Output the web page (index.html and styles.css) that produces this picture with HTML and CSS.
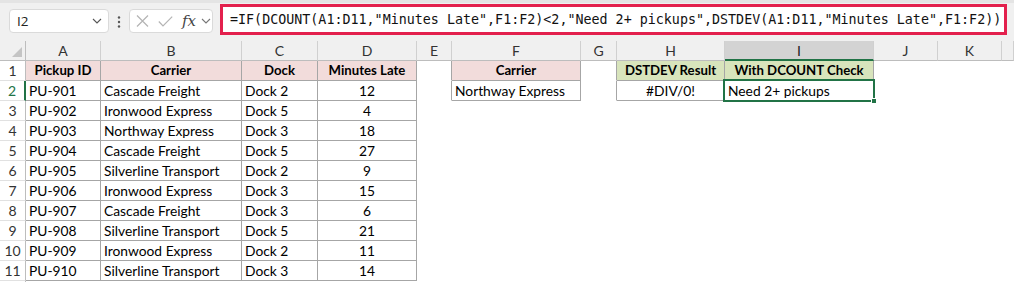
FILE: index.html
```html
<!DOCTYPE html>
<html>
<head>
<meta charset="utf-8">
<link rel="stylesheet" href="styles.css">
</head>
<body>
<div class="app">
  <div class="fbar">
    <div class="namebox">
      <span class="nb-text">I2</span>
      <svg class="chev" width="10" height="6" viewBox="0 0 10 6"><path d="M1 1 L5 5 L9 1" fill="none" stroke="#555" stroke-width="1.1"/></svg>
    </div>
    <svg class="dots" width="4" height="12" viewBox="0 0 4 12"><circle cx="2" cy="1.5" r="1.2" fill="#555"/><circle cx="2" cy="6" r="1.2" fill="#555"/><circle cx="2" cy="10.5" r="1.2" fill="#555"/></svg>
    <div class="fxbox">
      <svg class="ic-x" width="13" height="12" viewBox="0 0 13 12"><path d="M1 0.5 L12 11.5 M12 0.5 L1 11.5" stroke="#b4b4b4" stroke-width="1.2" fill="none"/></svg>
      <svg class="ic-ok" width="15" height="11" viewBox="0 0 15 11"><path d="M0.8 5.5 L5 10 L14.2 0.6" stroke="#b4b4b4" stroke-width="1.2" fill="none"/></svg>
      <span class="fx">fx</span>
      <svg class="chev2" width="10" height="6" viewBox="0 0 10 6"><path d="M1 1 L5 5 L9 1" fill="none" stroke="#777" stroke-width="1.1"/></svg>
    </div>
    <div class="formula">=IF(DCOUNT(A1:D11,"Minutes Late",F1:F2)&lt;2,"Need 2+ pickups",DSTDEV(A1:D11,"Minutes Late",F1:F2))</div>
  </div>
  <div class="sheet">
    <div class="ch corner"><svg width="10" height="10" viewBox="0 0 10 10"><path d="M10 0 L10 10 L0 10 Z" fill="#c4c4c4"/></svg></div>
    <div class="ch">A</div><div class="ch">B</div><div class="ch">C</div><div class="ch">D</div><div class="ch">E</div><div class="ch">F</div><div class="ch">G</div><div class="ch">H</div><div class="ch sel">I</div><div class="ch">J</div><div class="ch">K</div><div class="ch"></div>

    <div class="rh">1</div>
    <div class="c r b pk">Pickup ID</div><div class="c r b pk">Carrier</div><div class="c r b pk">Dock</div><div class="c r b pk">Minutes Late</div>
    <div class="c r"></div><div class="c r b pk">Carrier</div><div class="c r"></div>
    <div class="c r b gn">DSTDEV Result</div><div class="c r b gn">With DCOUNT Check</div><div class="c"></div><div class="c"></div><div class="c"></div>

    <div class="rh act">2</div>
    <div class="c r b">PU-901</div><div class="c r b">Cascade Freight</div><div class="c r b">Dock 2</div><div class="c r b n">12</div>
    <div class="c r"></div><div class="c r b">Northway Express</div><div class="c r"></div>
    <div class="c r b n">#DIV/0!</div><div class="c r b cur">Need 2+ pickups<span class="selbox"></span><span class="handle"></span></div><div class="c"></div><div class="c"></div><div class="c"></div>

    <div class="rh">3</div>
    <div class="c r b">PU-902</div><div class="c r b">Ironwood Express</div><div class="c r b">Dock 5</div><div class="c r b n">4</div>
    <div class="c"></div><div class="c"></div><div class="c"></div><div class="c"></div><div class="c"></div><div class="c"></div><div class="c"></div><div class="c"></div>

    <div class="rh">4</div>
    <div class="c r b">PU-903</div><div class="c r b">Northway Express</div><div class="c r b">Dock 3</div><div class="c r b n">18</div>
    <div class="c"></div><div class="c"></div><div class="c"></div><div class="c"></div><div class="c"></div><div class="c"></div><div class="c"></div><div class="c"></div>

    <div class="rh">5</div>
    <div class="c r b">PU-904</div><div class="c r b">Cascade Freight</div><div class="c r b">Dock 5</div><div class="c r b n">27</div>
    <div class="c"></div><div class="c"></div><div class="c"></div><div class="c"></div><div class="c"></div><div class="c"></div><div class="c"></div><div class="c"></div>

    <div class="rh">6</div>
    <div class="c r b">PU-905</div><div class="c r b">Silverline Transport</div><div class="c r b">Dock 2</div><div class="c r b n">9</div>
    <div class="c"></div><div class="c"></div><div class="c"></div><div class="c"></div><div class="c"></div><div class="c"></div><div class="c"></div><div class="c"></div>

    <div class="rh">7</div>
    <div class="c r b">PU-906</div><div class="c r b">Ironwood Express</div><div class="c r b">Dock 3</div><div class="c r b n">15</div>
    <div class="c"></div><div class="c"></div><div class="c"></div><div class="c"></div><div class="c"></div><div class="c"></div><div class="c"></div><div class="c"></div>

    <div class="rh">8</div>
    <div class="c r b">PU-907</div><div class="c r b">Cascade Freight</div><div class="c r b">Dock 3</div><div class="c r b n">6</div>
    <div class="c"></div><div class="c"></div><div class="c"></div><div class="c"></div><div class="c"></div><div class="c"></div><div class="c"></div><div class="c"></div>

    <div class="rh">9</div>
    <div class="c r b">PU-908</div><div class="c r b">Silverline Transport</div><div class="c r b">Dock 5</div><div class="c r b n">21</div>
    <div class="c"></div><div class="c"></div><div class="c"></div><div class="c"></div><div class="c"></div><div class="c"></div><div class="c"></div><div class="c"></div>

    <div class="rh">10</div>
    <div class="c r b">PU-909</div><div class="c r b">Ironwood Express</div><div class="c r b">Dock 2</div><div class="c r b n">11</div>
    <div class="c"></div><div class="c"></div><div class="c"></div><div class="c"></div><div class="c"></div><div class="c"></div><div class="c"></div><div class="c"></div>

    <div class="rh">11</div>
    <div class="c r b">PU-910</div><div class="c r b">Silverline Transport</div><div class="c r b">Dock 3</div><div class="c r b n">14</div>
    <div class="c"></div><div class="c"></div><div class="c"></div><div class="c"></div><div class="c"></div><div class="c"></div><div class="c"></div><div class="c"></div>

    <div class="rh"></div>
    <div class="c"></div><div class="c"></div><div class="c"></div><div class="c"></div><div class="c"></div><div class="c"></div><div class="c"></div><div class="c"></div><div class="c"></div><div class="c"></div><div class="c"></div><div class="c"></div>
  </div>
</div>
</body>
</html>
```

FILE: styles.css
```css
* { box-sizing: border-box; }
html, body { margin: 0; padding: 0; background: #fff; overflow: hidden; }
.app { width: 1014px; height: 282px; overflow: hidden; }

.fbar {
  height: 41px;
  background: #f0f0f0;
  border-top: 3px solid #e4e4e4;
  display: flex;
  align-items: flex-start;
  position: relative;
}
.namebox {
  margin-top: 6px;
  margin-left: 9px;
  width: 100px;
  height: 24px;
  background: #fff;
  border: 1px solid #dadada;
  border-radius: 4px;
  display: flex;
  align-items: center;
  justify-content: space-between;
  padding: 0 6px 0 7px;
  font-family: "Open Sans", "Noto Sans", sans-serif;
  font-size: 13.5px;
  color: #222;
}
.dots { margin: 13px 0 0 8px; }
.fxbox {
  margin-top: 6px;
  margin-left: 8px;
  width: 84px;
  height: 24px;
  background: #fff;
  border: 1px solid #dadada;
  border-radius: 4px;
  display: flex;
  align-items: center;
  padding-left: 6px;
}
.ic-ok { margin-left: 9px; }
.fx {
  margin-left: 9px;
  font-family: "DejaVu Serif", "Liberation Serif", serif;
  font-style: italic;
  font-size: 15px;
  color: #444;
  line-height: 1;
}
.chev2 { margin-left: 5px; }
.formula {
  margin-top: 1px;
  margin-left: 7px;
  width: 787px;
  height: 31px;
  background: #fff;
  border: 3px solid #e3204d;
  padding-left: 7px;
  font-family: "DejaVu Sans Mono", "Liberation Mono", monospace;
  font-size: 13.35px;
  line-height: 25px;
  color: #111;
  white-space: nowrap;
  overflow: hidden;
}

.sheet {
  display: grid;
  grid-template-columns: 26px 75px 141px 76px 99px 35px 129px 36px 108px 149px 64px 64px 12px;
  grid-auto-rows: 20px;
  font-family: "Lato", "Liberation Sans", sans-serif;
  font-size: 13.8px;
  color: #000;
}
.ch {
  background: #f0f0f0;
  border-right: 1px solid #d0d0d0;
  border-bottom: 1px solid #bdbdbd;
  text-align: center;
  line-height: 19px;
  color: #333;
  font-size: 14px;
}
.ch.corner { display: flex; align-items: flex-end; justify-content: flex-end; padding: 0 3px 3px 0; border-right-color: #bdbdbd; }
.ch.sel { background: #d3d3d3; border-bottom: 2px solid #217346; color: #222; }
.rh {
  background: #fff;
  border-right: 1px solid #bdbdbd;
  border-bottom: 1px solid #e1e1e1;
  text-align: center;
  line-height: 19px;
  color: #333;
  font-size: 14px;
}
.rh.act { color: #217346; border-right: 2px solid #217346; }

.c {
  border-right: 1px solid transparent;
  border-bottom: 1px solid transparent;
  padding: 0 3px;
  line-height: 19px;
  white-space: nowrap;
  overflow: hidden;
}
.c.r { border-right-color: #a6a6a6; }
.c.b { border-bottom-color: #a6a6a6; }
.n { text-align: center; }
.pk { background: #f2dcdb; font-weight: bold; text-align: center; font-size: 13.2px; }
.gn { background: #d8e4bc; font-weight: bold; text-align: center; font-size: 13.2px; }
.cur { position: relative; overflow: visible; }
.selbox {
  position: absolute;
  left: -2px; top: -2px; right: -2px; bottom: -2px;
  border: 2px solid #217346;
  pointer-events: none;
}
.handle {
  position: absolute;
  right: -4px; bottom: -4px;
  width: 6px; height: 6px;
  background: #217346;
  border: 1px solid #fff;
}
```
